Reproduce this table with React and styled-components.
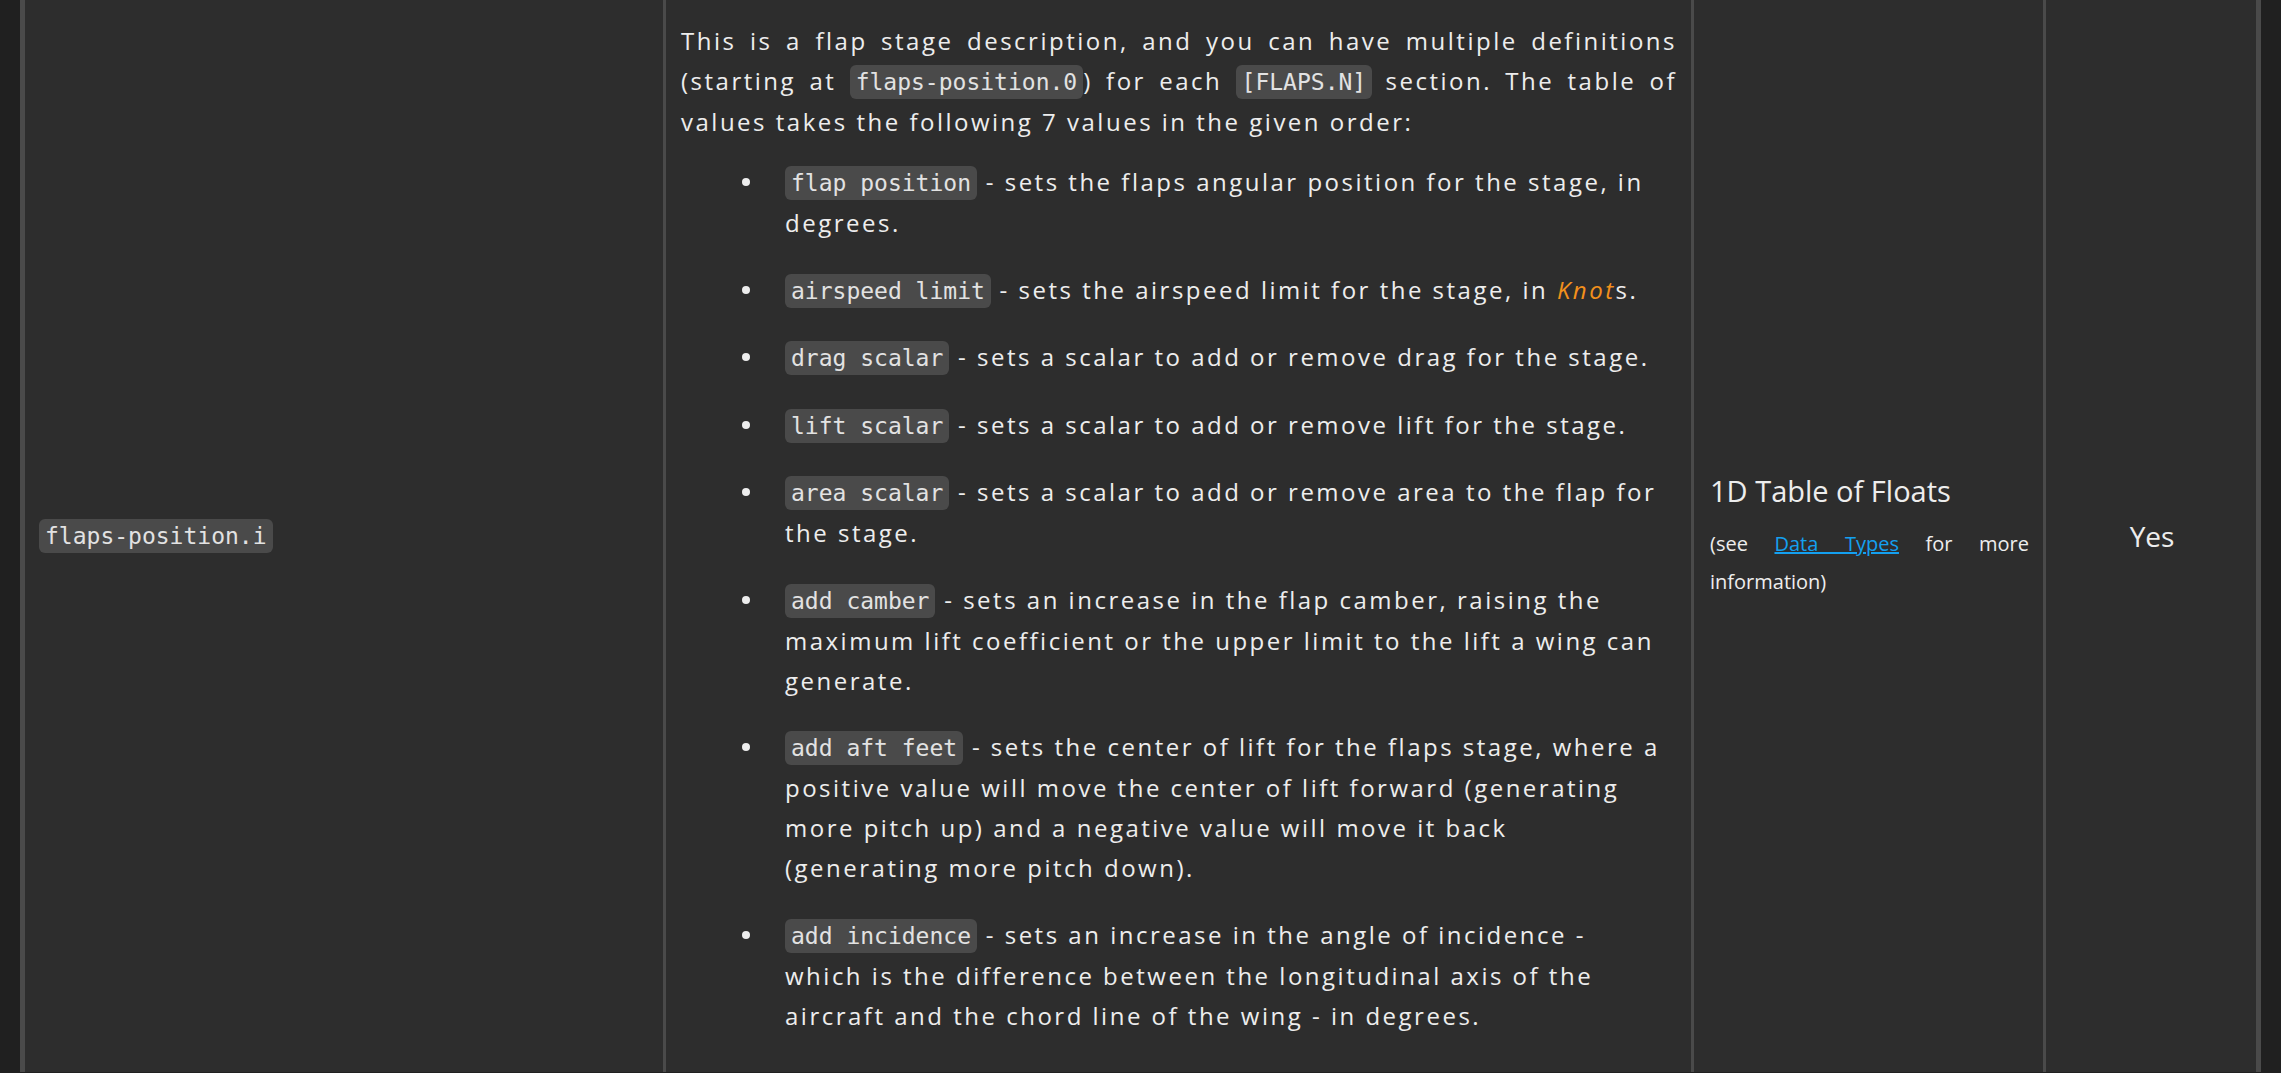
import styled, { createGlobalStyle } from "styled-components"

const GlobalStyle = createGlobalStyle`
  html, body {
    margin: 0;
    background: #202020;
  }
  body {
    font-family: "Open Sans", "Noto Sans", sans-serif;
    color: #ededed;
  }
`

const Page = styled.div`
  padding: 0 20px;
`

const Row = styled.div`
  display: grid;
  grid-template-columns: 638px 1028px 352px 1fr;
  background: #2d2d2d;
  border-left: 5px solid #4a4a4a;
  border-right: 5px solid #4a4a4a;
`

const Cell = styled.div`
  display: flex;
  flex-direction: column;
  justify-content: center;
  align-items: ${(p) => (p.$center ? "center" : "stretch")};
  padding: 0 14px 0 ${(p) => (p.$first ? "14px" : "16px")};
  border-left: ${(p) => (p.$first ? "none" : "3px solid #4a4a4a")};
`

const DescCell = styled(Cell)`
  justify-content: flex-start;
  padding: 21px 14px 36px 15px;
  font-size: 24px;
  line-height: 40px;
  letter-spacing: 2.5px;
`

const Code = styled.code`
  font-family: "DejaVu Sans Mono", monospace;
  font-size: 23px;
  letter-spacing: 0;
  color: #e2e2e2;
  background: #4a4a4a;
  border-radius: 6px;
  padding: 4px 6px;
`

const Intro = styled.p`
  margin: 0;
  text-align: justify;
`

const List = styled.ul`
  list-style: none;
  margin: 20px 0 0;
  padding: 0 8px 0 104px;
`

const Item = styled.li`
  position: relative;
  margin-bottom: 26.5px;

  &:last-child {
    margin-bottom: 0;
  }

  &::before {
    content: "";
    position: absolute;
    left: -43px;
    top: 16px;
    width: 8px;
    height: 8px;
    border-radius: 50%;
    background: #ededed;
  }
`

const Term = styled.em`
  color: #f2901c;
`

const TypeName = styled.div`
  font-size: 29px;
  line-height: 40px;
`

const Note = styled.p`
  margin: 14px 0 0;
  font-size: 20px;
  line-height: 38px;
  text-align: justify;
`

const DocLink = styled.a`
  color: #14a0f0;
  text-decoration: underline;
`

const Required = styled.div`
  font-size: 28px;
  line-height: 40px;
`

const stages = [
  { code: "flap position", text: " - sets the flaps angular position for the stage, in degrees." },
  { code: "airspeed limit", text: " - sets the airspeed limit for the stage, in ", knot: true },
  { code: "drag scalar", text: " - sets a scalar to add or remove drag for the stage." },
  { code: "lift scalar", text: " - sets a scalar to add or remove lift for the stage." },
  { code: "area scalar", text: " - sets a scalar to add or remove area to the flap for the stage." },
  {
    code: "add camber",
    text: " - sets an increase in the flap camber, raising the maximum lift coefficient or the upper limit to the lift a wing can generate.",
  },
  {
    code: "add aft feet",
    text: " - sets the center of lift for the flaps stage, where a positive value will move the center of lift forward (generating more pitch up) and a negative value will move it back (generating more pitch down).",
  },
  {
    code: "add incidence",
    text: " - sets an increase in the angle of incidence - which is the difference between the longitudinal axis of the aircraft and the chord line of the wing - in degrees.",
  },
]

export default function App() {
  return (
    <Page>
      <GlobalStyle />
      <Row>
        <Cell $first>
          <div>
            <Code>flaps-position.i</Code>
          </div>
        </Cell>

        <DescCell>
          <Intro>
            This is a flap stage description, and you can have multiple definitions (starting at{" "}
            <Code>flaps-position.0</Code>) for each <Code>[FLAPS.N]</Code> section. The table of values
            takes the following 7 values in the given order:
          </Intro>
          <List>
            {stages.map((s) => (
              <Item key={s.code}>
                <Code>{s.code}</Code>
                {s.text}
                {s.knot && (
                  <>
                    <Term>Knot</Term>s.
                  </>
                )}
              </Item>
            ))}
          </List>
        </DescCell>

        <Cell>
          <TypeName>1D Table of Floats</TypeName>
          <Note>
            (see <DocLink href="#">Data Types</DocLink> for more information)
          </Note>
        </Cell>

        <Cell $center>
          <Required>Yes</Required>
        </Cell>
      </Row>
    </Page>
  )
}
